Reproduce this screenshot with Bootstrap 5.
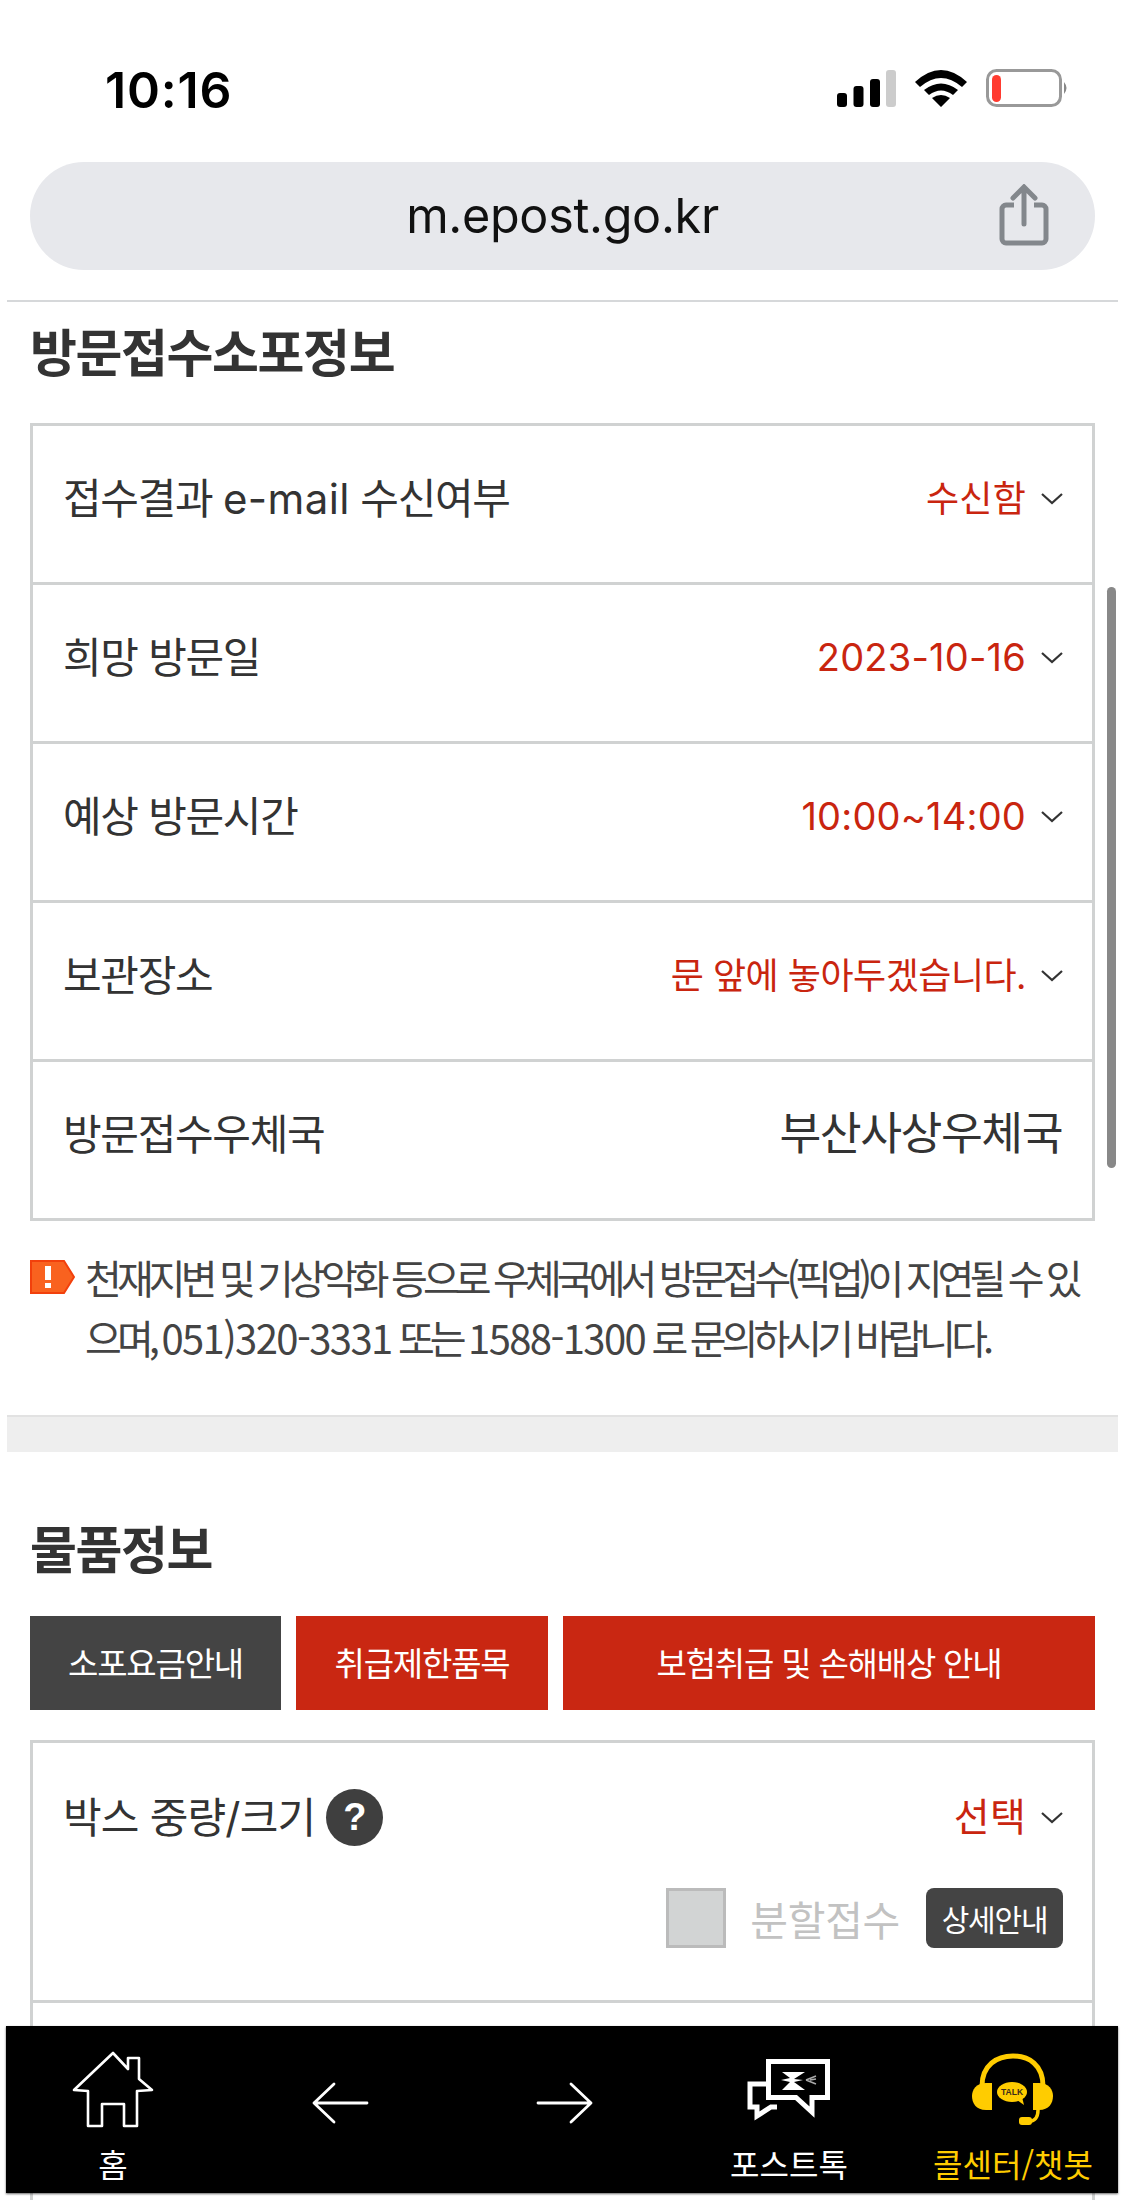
<!DOCTYPE html>
<html lang="ko">
<head>
    <meta charset="UTF-8">
    <meta name="viewport" content="width=device-width, initial-scale=1.0">
    <title>방문접수소포정보</title>
    <link href="https://cdn.jsdelivr.net/npm/bootstrap@5.3.0/dist/css/bootstrap.min.css" rel="stylesheet">
    <style>
        html, body { height: 2200px; overflow: hidden; }
        body {
            background: #fff;
            color: #333;
            font-family: "Noto Sans CJK KR", "Noto Sans", sans-serif;
        }
        .phone-page { position: relative; width: 1125px; height: 2200px; overflow: hidden; }
        .status-bar { height: 162px; padding: 69px 56px 0 105px; }
        .clock { font-family: Inter, sans-serif; font-weight: 600; font-size: 50px; line-height: 42px; color: #000; letter-spacing: .8px; }
        .url-wrap { margin: 0 7px; padding: 0 23px; height: 140px; border-bottom: 2px solid #d6d8da; }
        .url-pill { height: 108px; background: #e7e8ec; border-radius: 54px; position: relative; }
        .url-text { font-family: Inter, sans-serif; font-size: 48.5px; color: #111; letter-spacing: -.3px; }
        .share-icon { position: absolute; right: 46px; top: 22px; }
        .section-title { font-size: 51px; font-weight: 700; letter-spacing: -1.4px; line-height: 102px; color: #333; margin: 0; padding-left: 30px; }
        .title-visit { margin: -3px 0 22px; }
        .title-goods { margin: 44px 0 18px; }
        .info-box { margin: 0 30px; border: 3px solid #d0d2d2; }
        .info-row { height: 159px; padding: 0 29px 11px 30px; border-bottom: 3px solid #d0d2d2; font-family: Inter, "Noto Sans CJK KR", sans-serif; font-size: 42px; letter-spacing: -1.3px; color: #333; }
        .info-row:last-child { border-bottom: 0; height: 156px; }
        .latin-wide { letter-spacing: .4px; }
        .val-red { color: #c9250f; font-family: Inter, "Noto Sans CJK KR", sans-serif; font-size: 36px; letter-spacing: .2px; }
        .val-num { font-size: 38px; }
        .val-tight { letter-spacing: -.5px; }
        .val-big { font-size: 39px; }
        .val-dark { font-size: 45.5px; letter-spacing: -1.5px; color: #333; margin-right: 1px; }
        .chev { margin-left: 15px; flex: none; }
        .notice { padding: 0 30px; margin-top: 26px; height: 168px; font-size: 40px; line-height: 60px; letter-spacing: -4.9px; color: #444; }
        .notice-icon { margin-top: 13px; flex: none; }
        .notice-text { margin-left: 10px; white-space: nowrap; }
        .notice-num { letter-spacing: -1.6px; }
        .band { margin: 0 7px; height: 37px; background: #eeeeee; border-top: 2px solid #e2e2e2; }
        .tab-row { padding: 0 30px; gap: 15px; }
        .tab-btn { height: 94px; color: #fff; font-size: 33px; letter-spacing: -1.2px; border-radius: 0; border: 0; padding: 0; }
        .tab-dark, .tab-dark:hover { background: #444; width: 251px; color: #fff; }
        .tab-red, .tab-red:hover { background: #c92712; width: 252px; color: #fff; }
        .tab-wide, .tab-wide:hover { background: #c92712; flex: 1; color: #fff; }
        .goods-box { margin: 30px 30px 0; border: 3px solid #d0d2d2; }
        .goods-row { height: 260px; border-bottom: 3px solid #d0d2d2; padding: 45px 29px 0 30px; }
        .goods-label { font-family: Inter, "Noto Sans CJK KR", sans-serif; font-size: 42px; letter-spacing: -.8px; line-height: 57px; }
        .goods-empty { height: 200px; }
        .help-dot { width: 57px; height: 57px; border-radius: 50%; background: #3f3f3f; color: #fff; font-family: "Liberation Sans", sans-serif; font-weight: 700; font-size: 38px; margin-left: 11px; letter-spacing: 0; }
        .split-line { margin-top: 41px; }
        .split-check { width: 60px; height: 60px; background: #d2d4d4; border: 3px solid #bbb; }
        .split-label { font-size: 41px; color: #c2c2c2; letter-spacing: -.3px; margin: 0 26px 0 24px; }
        .detail-btn { width: 137px; height: 60px; background: #444; color: #fff; border-radius: 8px; font-size: 30px; letter-spacing: -1.2px; }
        .scroll-thumb { position: absolute; left: 1107px; top: 587px; width: 9px; height: 581px; border-radius: 5px; background: #888; }
        .bottom-nav { position: absolute; left: 6px; right: 7px; top: 2026px; height: 167px; background: #000; box-shadow: 0 1px 2px rgba(0,0,0,.6); font-size: 32px; letter-spacing: 0; }
        .nav-cell { padding-top: 24px; }
        .nav-cell:nth-child(1) { width: 214px; }
        .nav-cell:nth-child(2) { width: 240px; }
        .nav-cell:nth-child(3) { width: 210px; }
        .nav-cell:nth-child(4) { width: 238px; }
        .nav-cell:nth-child(5) { width: 210px; }
        .nav-cell svg { display: block; height: 80px; }
        .nav-text { color: #fff; margin-top: 13px; line-height: 40px; white-space: nowrap; }
        .nav-yellow { color: #fc0; }
    </style>
</head>
<body>
    <div class="phone-page">
        <div class="status-bar d-flex justify-content-between align-items-start">
            <div class="clock">10:16</div>
            <svg width="232" height="39" viewBox="0 0 232 39">
                <rect x="0" y="24" width="10" height="14" rx="3" fill="#000"/>
                <rect x="16.5" y="17" width="10" height="21" rx="3" fill="#000"/>
                <rect x="33" y="10" width="10" height="28" rx="3" fill="#000"/>
                <rect x="49" y="1" width="10" height="37" rx="3" fill="#ccc"/>
                <path d="M78 13Q104-11 130 13L125 18Q104 0 83 18ZM87 21Q104 8 121 21L116 26Q104 17 92 26ZM95 29Q104 23 113 29L104 38Z" fill="#000"/>
                <rect x="150.5" y="1.5" width="73" height="35" rx="9" fill="none" stroke="#999" stroke-width="3"/>
                <rect x="155" y="6" width="9" height="27" rx="4.5" fill="#ff3b30"/>
                <path d="M227 13Q232 19 227 25Z" fill="#888"/>
            </svg>
        </div>
        <div class="url-wrap">
            <div class="url-pill d-flex align-items-center justify-content-center">
                <span class="url-text">m.epost.go.kr</span>
                <svg class="share-icon" width="50" height="62" viewBox="0 0 50 62" fill="none" stroke="#83878c" stroke-width="5">
                    <path d="M15 21H7a4 4 0 0 0-4 4v30a4 4 0 0 0 4 4h36a4 4 0 0 0 4-4V25a4 4 0 0 0-4-4h-8"/>
                    <path d="M25 40V4M14 14L25 3l11 11" stroke-linecap="round"/>
                </svg>
            </div>
        </div>
        <h2 class="section-title title-visit">방문접수소포정보</h2>
        <div class="info-box">
            <div class="info-row d-flex justify-content-between align-items-center">
                <span>접수결과 <span class="latin-wide">e-mail</span> 수신여부</span>
                <span class="d-flex align-items-center"><span class="val-red">수신함</span><svg class="chev" width="22" height="13" viewBox="0 0 22 13" fill="none" stroke="#333" stroke-width="2.2"><path d="M1 2l10 9 10-9"/></svg></span>
            </div>
            <div class="info-row d-flex justify-content-between align-items-center">
                <span>희망 방문일</span>
                <span class="d-flex align-items-center"><span class="val-red val-num">2023-10-16</span><svg class="chev" width="22" height="13" viewBox="0 0 22 13" fill="none" stroke="#333" stroke-width="2.2"><path d="M1 2l10 9 10-9"/></svg></span>
            </div>
            <div class="info-row d-flex justify-content-between align-items-center">
                <span>예상 방문시간</span>
                <span class="d-flex align-items-center"><span class="val-red val-num">10:00~14:00</span><svg class="chev" width="22" height="13" viewBox="0 0 22 13" fill="none" stroke="#333" stroke-width="2.2"><path d="M1 2l10 9 10-9"/></svg></span>
            </div>
            <div class="info-row d-flex justify-content-between align-items-center">
                <span>보관장소</span>
                <span class="d-flex align-items-center"><span class="val-red val-tight">문 앞에 놓아두겠습니다.</span><svg class="chev" width="22" height="13" viewBox="0 0 22 13" fill="none" stroke="#333" stroke-width="2.2"><path d="M1 2l10 9 10-9"/></svg></span>
            </div>
            <div class="info-row d-flex justify-content-between align-items-center">
                <span>방문접수우체국</span>
                <span class="val-dark">부산사상우체국</span>
            </div>
        </div>
        <div class="notice d-flex">
            <svg class="notice-icon" width="45" height="34" viewBox="0 0 45 34">
                <path d="M1 1H34L44 17L34 33H1Z" fill="#f9621f" stroke="#f2400c" stroke-width="2"/>
                <rect x="15" y="6" width="6" height="14" fill="#fff"/>
                <rect x="15" y="23" width="6" height="5" fill="#fff"/>
            </svg>
            <div class="notice-text">천재지변 및 기상악화 등으로 우체국에서 방문접수(픽업)이 지연될 수 있<br>으며, <span class="notice-num">051)320-3331</span> 또는 <span class="notice-num">1588-1300</span> 로 문의하시기 바랍니다.</div>
        </div>
        <div class="band"></div>
        <h2 class="section-title title-goods">물품정보</h2>
        <div class="tab-row d-flex">
            <button type="button" class="btn tab-btn tab-dark">소포요금안내</button>
            <button type="button" class="btn tab-btn tab-red">취급제한품목</button>
            <button type="button" class="btn tab-btn tab-wide">보험취급 및 손해배상 안내</button>
        </div>
        <div class="goods-box">
            <div class="goods-row">
                <div class="d-flex justify-content-between align-items-center">
                    <span class="d-flex align-items-center goods-label">박스 중량/크기<span class="help-dot d-flex align-items-center justify-content-center">?</span></span>
                    <span class="d-flex align-items-center"><span class="val-red val-big">선택</span><svg class="chev" width="22" height="13" viewBox="0 0 22 13" fill="none" stroke="#333" stroke-width="2.2"><path d="M1 2l10 9 10-9"/></svg></span>
                </div>
                <div class="d-flex justify-content-end align-items-center split-line">
                    <span class="split-check"></span>
                    <span class="split-label">분할접수</span>
                    <span class="detail-btn d-flex align-items-center justify-content-center">상세안내</span>
                </div>
            </div>
            <div class="goods-empty"></div>
        </div>
        <div class="scroll-thumb"></div>
        <div class="bottom-nav d-flex">
            <div class="nav-cell d-flex flex-column align-items-center">
                <svg width="86" height="80" viewBox="0 0 86 80" fill="none" stroke="#fff" stroke-width="2.6" stroke-linejoin="round">
                    <path d="M43 3L58 19V8H69V29L82 40L67 41V76H54V54H32V76H18V41L4 40Z"/>
                </svg>
                <span class="nav-text">홈</span>
            </div>
            <div class="nav-cell d-flex flex-column align-items-center">
                <svg width="60" height="80" viewBox="0 0 60 80" fill="none" stroke="#fff" stroke-width="2.8" stroke-linecap="round" stroke-linejoin="round">
                    <path d="M57 53H4M24 34L4 53L24 72"/>
                </svg>
            </div>
            <div class="nav-cell d-flex flex-column align-items-center">
                <svg width="60" height="80" viewBox="0 0 60 80" fill="none" stroke="#fff" stroke-width="2.8" stroke-linecap="round" stroke-linejoin="round">
                    <path d="M3 53H56M36 34L56 53L36 72"/>
                </svg>
            </div>
            <div class="nav-cell d-flex flex-column align-items-center">
                <svg width="84" height="80" viewBox="0 0 84 80">
                    <path d="M21.5 11.5H80.5V47.5H65V62L49 47.5H21.5Z" fill="none" stroke="#fff" stroke-width="5"/>
                    <path d="M19 34H3V57H10V66L24 57H30" fill="none" stroke="#fff" stroke-width="5"/>
                    <path d="M35 22H58L47 29L56 30L47 32L58 40H35L43 32L34 30L43 28Z" fill="#fff"/>
                    <path d="M59 30L69 26M59 30L69 34M63 30L69 29" fill="none" stroke="#aaa" stroke-width="1.5"/>
                </svg>
                <span class="nav-text">포스트톡</span>
            </div>
            <div class="nav-cell d-flex flex-column align-items-center">
                <svg width="82" height="80" viewBox="0 0 82 80">
                    <path d="M10 36C10 15 25 6 41 6C57 6 71 15 71 36" fill="none" stroke="#fc0" stroke-width="5"/>
                    <path d="M20 33H14C4 33 0 40 0 46C0 53 4 60 14 60H20Z" fill="#fc0"/>
                    <path d="M61 33H67C77 33 81 40 81 46C81 53 77 60 67 60H61Z" fill="#fc0"/>
                    <path d="M66 60C66 68 62 71 58 71" fill="none" stroke="#fc0" stroke-width="3.5"/>
                    <rect x="47" y="67" width="13" height="8" rx="3" fill="#fc0"/>
                    <ellipse cx="40" cy="42" rx="15" ry="10" fill="#fc0"/>
                    <path d="M45 50L52 55L50 47Z" fill="#fc0"/>
                    <text x="40" y="45" text-anchor="middle" font-family="Liberation Sans, sans-serif" font-size="8.5" font-weight="700" fill="#3c2a1a">TALK</text>
                </svg>
                <span class="nav-text nav-yellow">콜센터/챗봇</span>
            </div>
        </div>
    </div>
    <script src="https://cdn.jsdelivr.net/npm/bootstrap@5.3.0/dist/js/bootstrap.bundle.min.js"></script>
</body>
</html>
